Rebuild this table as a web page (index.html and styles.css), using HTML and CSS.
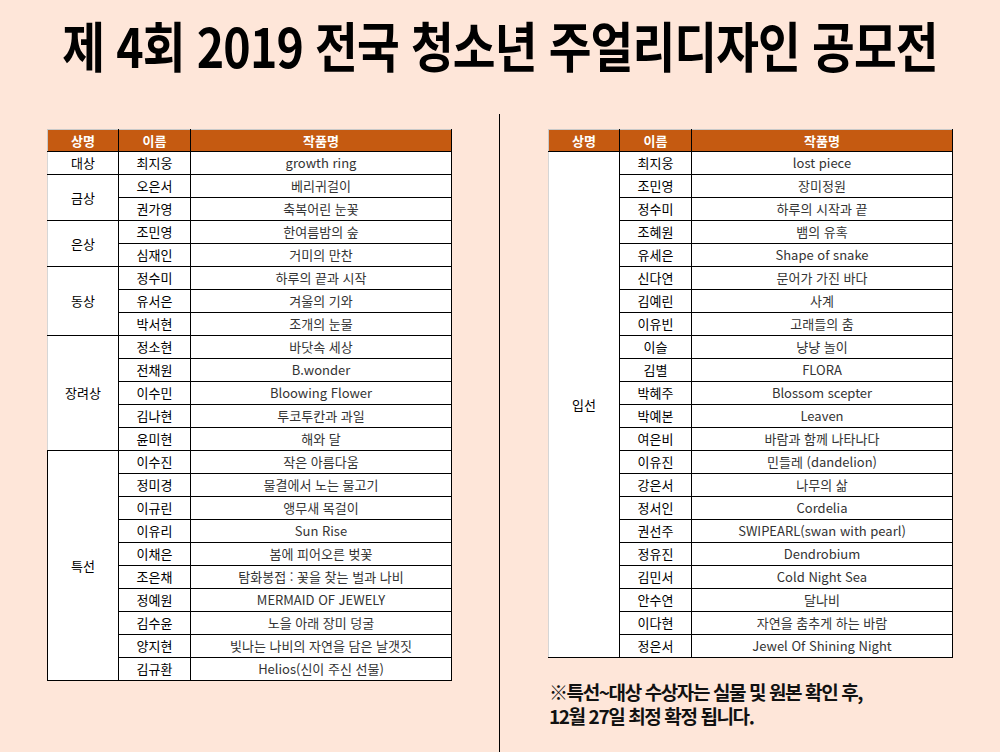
FILE: index.html
```html
<!DOCTYPE html>
<html lang="ko">
<head>
<meta charset="utf-8">
<title>제 4회 2019 전국 청소년 주얼리디자인 공모전</title>
<link rel="stylesheet" href="styles.css">
</head>
<body>
<header class="title-bar">
  <h1 class="title"><span class="title-text">제 4회 2019 전국 청소년 주얼리디자인 공모전</span></h1>
</header>
<main class="content">
  <section class="pane pane-left">
    <table class="awards">
      <colgroup><col class="c-prize"><col class="c-name"><col class="c-work"></colgroup>
      <thead><tr><th class="first">상명</th><th>이름</th><th>작품명</th></tr></thead>
      <tbody>
        <tr><td class="prize first">대상</td><td class="name">최지웅</td><td class="work">growth ring</td></tr>
        <tr><td class="prize first" rowspan="2">금상</td><td class="name">오은서</td><td class="work">베리귀걸이</td></tr>
        <tr><td class="name">권가영</td><td class="work">축복어린 눈꽃</td></tr>
        <tr><td class="prize first" rowspan="2">은상</td><td class="name">조민영</td><td class="work">한여름밤의 숲</td></tr>
        <tr><td class="name">심재인</td><td class="work">거미의 만찬</td></tr>
        <tr><td class="prize first" rowspan="3">동상</td><td class="name">정수미</td><td class="work">하루의 끝과 시작</td></tr>
        <tr><td class="name">유서은</td><td class="work">겨울의 기와</td></tr>
        <tr><td class="name">박서현</td><td class="work">조개의 눈물</td></tr>
        <tr><td class="prize first" rowspan="5">장려상</td><td class="name">정소현</td><td class="work">바닷속 세상</td></tr>
        <tr><td class="name">전채원</td><td class="work">B.wonder</td></tr>
        <tr><td class="name">이수민</td><td class="work">Bloowing Flower</td></tr>
        <tr><td class="name">김나현</td><td class="work">투코투칸과 과일</td></tr>
        <tr><td class="name">윤미현</td><td class="work">해와 달</td></tr>
        <tr><td class="prize first dark" rowspan="10">특선</td><td class="name">이수진</td><td class="work">작은 아름다움</td></tr>
        <tr><td class="name">정미경</td><td class="work">물결에서 노는 물고기</td></tr>
        <tr><td class="name">이규린</td><td class="work">앵무새 목걸이</td></tr>
        <tr><td class="name">이유리</td><td class="work">Sun Rise</td></tr>
        <tr><td class="name">이채은</td><td class="work">봄에 피어오른 벚꽃</td></tr>
        <tr><td class="name">조은채</td><td class="work">탐화봉접 : 꽃을 찾는 벌과 나비</td></tr>
        <tr><td class="name">정예원</td><td class="work">MERMAID OF JEWELY</td></tr>
        <tr><td class="name">김수윤</td><td class="work">노을 아래 장미 덩굴</td></tr>
        <tr><td class="name">양지현</td><td class="work">빛나는 나비의 자연을 담은 날갯짓</td></tr>
        <tr><td class="name">김규환</td><td class="work">Helios(신이 주신 선물)</td></tr>
      </tbody>
    </table>
  </section>
  <div class="divider"></div>
  <section class="pane pane-right">
    <table class="awards">
      <colgroup><col class="c-prize"><col class="c-name"><col class="c-work"></colgroup>
      <thead><tr><th class="first">상명</th><th>이름</th><th>작품명</th></tr></thead>
      <tbody>
        <tr><td class="prize first" rowspan="22">입선</td><td class="name">최지웅</td><td class="work">lost piece</td></tr>
        <tr><td class="name">조민영</td><td class="work">장미정원</td></tr>
        <tr><td class="name">정수미</td><td class="work">하루의 시작과 끝</td></tr>
        <tr><td class="name">조혜원</td><td class="work">뱀의 유혹</td></tr>
        <tr><td class="name">유세은</td><td class="work">Shape of snake</td></tr>
        <tr><td class="name">신다연</td><td class="work">문어가 가진 바다</td></tr>
        <tr><td class="name">김예린</td><td class="work">사계</td></tr>
        <tr><td class="name">이유빈</td><td class="work">고래들의 춤</td></tr>
        <tr><td class="name">이슬</td><td class="work">냥냥 놀이</td></tr>
        <tr><td class="name">김별</td><td class="work">FLORA</td></tr>
        <tr><td class="name">박혜주</td><td class="work">Blossom scepter</td></tr>
        <tr><td class="name">박예본</td><td class="work">Leaven</td></tr>
        <tr><td class="name">여은비</td><td class="work">바람과 함께 나타나다</td></tr>
        <tr><td class="name">이유진</td><td class="work">민들레 (dandelion)</td></tr>
        <tr><td class="name">강은서</td><td class="work">나무의 삶</td></tr>
        <tr><td class="name">정서인</td><td class="work">Cordelia</td></tr>
        <tr><td class="name">권선주</td><td class="work">SWIPEARL(swan with pearl)</td></tr>
        <tr><td class="name">정유진</td><td class="work">Dendrobium</td></tr>
        <tr><td class="name">김민서</td><td class="work">Cold Night Sea</td></tr>
        <tr><td class="name">안수연</td><td class="work">달나비</td></tr>
        <tr><td class="name">이다현</td><td class="work">자연을 춤추게 하는 바람</td></tr>
        <tr><td class="name">정은서</td><td class="work">Jewel Of Shining Night</td></tr>
      </tbody>
    </table>
    <p class="note"><span class="note-line">※특선~대상 수상자는 실물 및 원본 확인 후,</span><span class="note-line">12월 27일 최정 확정 됩니다.</span></p>
  </section>
</main>
</body>
</html>
```

FILE: styles.css
```css
* { box-sizing: border-box; }
html, body {
  margin: 0;
  padding: 0;
  background: #fee6d9;
}
body {
  width: 1000px;
  height: 752px;
  overflow: hidden;
  font-family: "Noto Sans CJK KR", "Noto Sans", sans-serif;
  color: #000;
}
.title-bar {
  height: 114px;
  display: flex;
  justify-content: center;
  align-items: flex-start;
}
.title {
  margin: 0;
  padding-top: 10px;
  font-size: 54px;
  font-weight: 700;
  line-height: 70px;
  white-space: nowrap;
}
.title-text {
  display: inline-block;
  transform: scaleX(0.86);
  letter-spacing: -1px;
}
.content {
  display: flex;
  height: 638px;
}
.pane {
  padding-top: 15px;
}
.pane-left {
  width: 499px;
  padding-left: 47px;
}
.pane-right {
  width: 500px;
  padding-left: 48px;
}
.divider {
  width: 1px;
  background: #000;
}
.awards {
  border-collapse: collapse;
  table-layout: fixed;
  width: 404px;
  font-size: 13px;
}
.c-prize { width: 71px; }
.c-name { width: 72px; }
.c-work { width: 261px; }
.awards th {
  background: #c55a11;
  color: #fff;
  font-weight: 700;
  height: 22px;
  padding: 0;
  line-height: 20px;
  border: 1px solid #000;
  border-top: 1px solid #c9c9c9;
  text-align: center;
}
.awards th.first { border-left: 1px solid #c9c9c9; }
.awards td {
  background: #fff;
  height: 23px;
  padding: 0;
  line-height: 20px;
  border: 1px solid #000;
  text-align: center;
  white-space: nowrap;
}
.awards td.first { border-left: 1px solid #d6d6d6; }
.awards td.first.dark { border-left: 1px solid #000; }
.awards td.name { color: #000; }
.awards td.work { color: #333; }
.note {
  margin: 22px 0 0 1px;
  font-size: 19px;
  font-weight: 700;
  letter-spacing: -1.4px;
  color: #111;
}
.note-line {
  display: block;
  height: 24px;
  line-height: 24px;
}
```
